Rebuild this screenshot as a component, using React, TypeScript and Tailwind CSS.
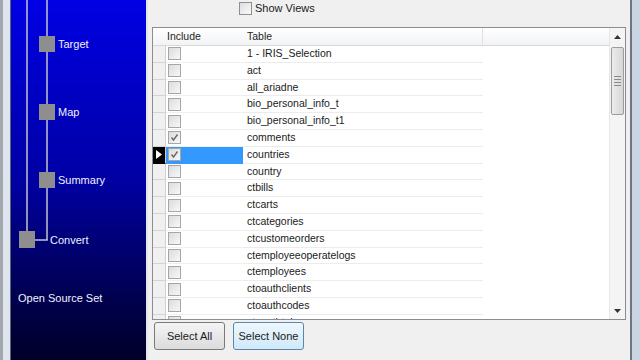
import React from "react";

const rows = [
  { name: "1 - IRIS_Selection" },
  { name: "act" },
  { name: "all_ariadne" },
  { name: "bio_personal_info_t" },
  { name: "bio_personal_info_t1" },
  { name: "comments", checked: true },
  { name: "countries", checked: true, current: true },
  { name: "country" },
  { name: "ctbills" },
  { name: "ctcarts" },
  { name: "ctcategories" },
  { name: "ctcustomeorders" },
  { name: "ctemployeeoperatelogs" },
  { name: "ctemployees" },
  { name: "ctoauthclients" },
  { name: "ctoauthcodes" },
  { name: "ctoauthtokens" },
];

const CheckBox = ({ checked }: { checked?: boolean }) => (
  <div className="w-[13px] h-[13px] border border-[#a6a6a6] bg-gradient-to-br from-[#dcdcdc] to-[#f8f8f8] flex items-center justify-center">
    {checked && (
      <svg width="9" height="9" viewBox="0 0 9 9">
        <path d="M1.5 4.5 L3.5 7 L7.5 1.5" fill="none" stroke="#6a6a6a" strokeWidth="1.4" />
      </svg>
    )}
  </div>
);

const Step = ({ label, className }: { label: string; className: string }) => (
  <div className={`absolute text-[11px] text-[#f0f2ff] leading-none ${className}`}>{label}</div>
);

const SidePanel = () => (
  <div className="relative w-[135px] h-full bg-gradient-to-b from-[#0000e4] via-[#0000a4] to-[#000028]">
    <svg className="absolute inset-0" width="135" height="360">
      <line x1="16" y1="0" x2="16" y2="231" stroke="#b8b8c8" strokeWidth="1.6" />
      <line x1="36" y1="0" x2="36" y2="240" stroke="#b8b8c8" strokeWidth="1.6" />
      <line x1="23" y1="240" x2="36.8" y2="240" stroke="#b8b8c8" strokeWidth="1.6" />
      <rect x="28" y="36" width="16" height="16" fill="#8e8e8e" />
      <rect x="28" y="104" width="16" height="16" fill="#8e8e8e" />
      <rect x="28" y="172" width="16" height="16" fill="#8e8e8e" />
      <rect x="8" y="231" width="16" height="17" fill="#8e8e8e" />
    </svg>
    <Step label="Target" className="left-[47px] top-[39px]" />
    <Step label="Map" className="left-[47px] top-[107px]" />
    <Step label="Summary" className="left-[47px] top-[175px]" />
    <Step label="Convert" className="left-[39px] top-[235px]" />
    <Step label="Open Source Set" className="left-[7px] top-[293px]" />
  </div>
);

const ScrollBar = () => (
  <div className="w-[16px] h-full bg-[#f4f4f4] border-l border-[#e6e6e6] flex flex-col">
    <div className="h-[17px] flex items-center justify-center">
      <svg width="7" height="4" viewBox="0 0 7 4"><path d="M0 4 L3.5 0 L7 4 Z" fill="#333" /></svg>
    </div>
    <div className="mt-[2px] mx-[1px] h-[68px] rounded-[2px] border border-[#9c9c9c] bg-gradient-to-r from-[#ececec] to-[#d6d6d6] flex flex-col items-center justify-center gap-[2px]">
      <div className="w-[7px] h-[1px] bg-[#8a8a8a]" />
      <div className="w-[7px] h-[1px] bg-[#8a8a8a]" />
      <div className="w-[7px] h-[1px] bg-[#8a8a8a]" />
      <div className="w-[7px] h-[1px] bg-[#8a8a8a]" />
    </div>
    <div className="flex-1" />
    <div className="h-[17px] flex items-center justify-center">
      <svg width="7" height="4" viewBox="0 0 7 4"><path d="M0 0 L3.5 4 L7 0 Z" fill="#333" /></svg>
    </div>
  </div>
);

const Grid = () => (
  <div className="h-[293px] border border-[#8a8e94] bg-white flex overflow-hidden">
    <div className="flex-1 flex flex-col overflow-hidden">
      <div className="h-[18px] shrink-0 flex bg-gradient-to-b from-white to-[#f2f3f5] border-b border-[#d8d8d8] text-[10.5px] text-[#1e1e1e]">
        <div className="w-[13px]" />
        <div className="w-[78px] pl-[1px] flex items-center">Include</div>
        <div className="w-[239px] pl-[3px] flex items-center border-r border-[#e2e2e2]">Table</div>
      </div>
      <div className="flex flex-col">
        {rows.map((r) => (
          <div key={r.name} className="h-[16.8px] shrink-0 flex text-[10.5px] text-[#1a1a1a]">
            <div
              className={`w-[13px] flex items-center justify-center border-b ${
                r.current ? "bg-black border-black" : "bg-[#f0f0f0] border-[#d4d4d4]"
              } border-r border-r-[#cfcfcf]`}
            >
              {r.current && (
                <svg width="6" height="9" viewBox="0 0 6 9"><path d="M0 0 L6 4.5 L0 9 Z" fill="white" /></svg>
              )}
            </div>
            <div
              className={`w-[77px] pl-[2px] flex items-center border-b ${
                r.current ? "bg-[#3399ff] border-[#3399ff]" : "border-[#f0f0f0]"
              }`}
            >
              <CheckBox checked={r.checked} />
            </div>
            <div className="w-[240px] pl-[4px] flex items-center border-b border-[#ececec] whitespace-nowrap">
              {r.name}
            </div>
          </div>
        ))}
      </div>
    </div>
    <ScrollBar />
  </div>
);

const Button = ({ label, hot }: { label: string; hot?: boolean }) => (
  <div
    className={`w-[71px] h-[28px] rounded-[3px] border flex items-center justify-center text-[11px] text-[#1a1a1a] ${
      hot
        ? "border-[#5a86ab] bg-gradient-to-b from-[#eef7fd] to-[#cfe9f8]"
        : "border-[#7a7a7a] bg-gradient-to-b from-[#f4f4f4] to-[#dcdcdc]"
    }`}
  >
    {label}
  </div>
);

export default function App() {
  return (
    <div
      className="w-[640px] h-[360px] flex overflow-hidden bg-[#f0f0f0]"
      style={{ fontFamily: '"Liberation Sans", Arial, sans-serif' }}
    >
      <div className="w-[11px] h-full flex">
        <div className="w-[3px] bg-[#a4a8ae]" />
        <div className="w-[7px] bg-[#dfe5ec]" />
        <div className="w-[1px] bg-[#5c6470]" />
      </div>
      <SidePanel />
      <div className="w-[484px] h-full pl-[4px] pr-[4px] flex flex-col bg-[#f0f0f0] border-l-[2px] border-[#e4e6ea]">
        <div className="h-[27px] shrink-0 flex items-start pt-[2px] pl-[87px] gap-[3px]">
          <div className="w-[13px] h-[13px] border border-[#8f8f8f] bg-gradient-to-br from-[#dedede] to-[#fafafa]" />
          <span className="text-[11px] text-[#1a1a1a] leading-[13px]">Show Views</span>
        </div>
        <Grid />
        <div className="mt-[2px] pl-[2px] flex gap-[8px]">
          <Button label="Select All" />
          <Button label="Select None" hot />
        </div>
      </div>
      <div className="flex-1 h-full flex">
        <div className="w-[2px] bg-[#6e7680]" />
        <div className="flex-1 bg-[#c9d5e2]" />
      </div>
    </div>
  );
}
